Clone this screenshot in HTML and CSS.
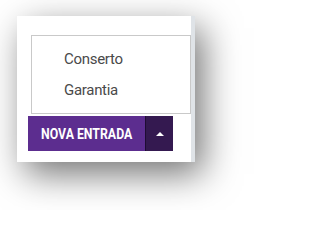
FILE: index.html
```html
<!DOCTYPE html>
<html>
<head>
<meta charset="utf-8">
<link rel="stylesheet" href="styles.css">
</head>
<body>
<div class="stage">
  <div class="panel">
    <div class="content">
      <ul class="menu">
        <li class="item">Conserto</li>
        <li class="item">Garantia</li>
      </ul>
      <div class="split">
        <button class="main"><span class="label">NOVA ENTRADA</span></button>
        <button class="toggle"><span class="caret"></span></button>
      </div>
    </div>
    <div class="strip"></div>
  </div>
</div>
</body>
</html>
```
FILE: styles.css
```css
html, body {
  margin: 0;
  padding: 0;
  background: #ffffff;
  min-height: 210px;
}
.stage {
  box-sizing: border-box;
  min-height: 210px;
  padding: 16px 0 0 17px;
}
.panel {
  width: 178px;
  height: 146px;
  background: #ffffff;
  display: flex;
  box-shadow: 8px 12px 34px rgba(0, 0, 0, 0.55);
}
.content {
  flex: 1;
  padding: 19px 0 0 11px;
}
.strip {
  width: 7px;
  background: #dfe3e7;
}
.menu {
  position: relative;
  z-index: 1;
  list-style: none;
  margin: 0 0 2px 3px;
  padding: 8px 0 7px 0;
  width: 158px;
  background: #ffffff;
  border: 1px solid #c9c9c9;
}
.item {
  height: 31px;
  line-height: 31px;
  padding-left: 32px;
  font-family: Roboto, "Liberation Sans", sans-serif;
  font-size: 15px;
  letter-spacing: -0.3px;
  color: #4a4a4a;
}
.split {
  display: flex;
  height: 35px;
  width: 145px;
}
.split button {
  border: 0;
  margin: 0;
  padding: 0;
  height: 35px;
  color: #ffffff;
  display: flex;
  align-items: center;
  justify-content: center;
}
.main {
  width: 117px;
  background: #5c2d8f;
  font-family: Roboto, "Liberation Sans", sans-serif;
  font-weight: bold;
  font-size: 15px;
  white-space: nowrap;
}
.label {
  display: inline-block;
  transform: scaleX(0.82);
}
.toggle {
  width: 28px;
  background: #341950;
  border-left: 1px solid #1f0d33 !important;
}
.caret {
  width: 0;
  height: 0;
  border-left: 4px solid transparent;
  border-right: 4px solid transparent;
  border-bottom: 4px solid #ffffff;
}
```
